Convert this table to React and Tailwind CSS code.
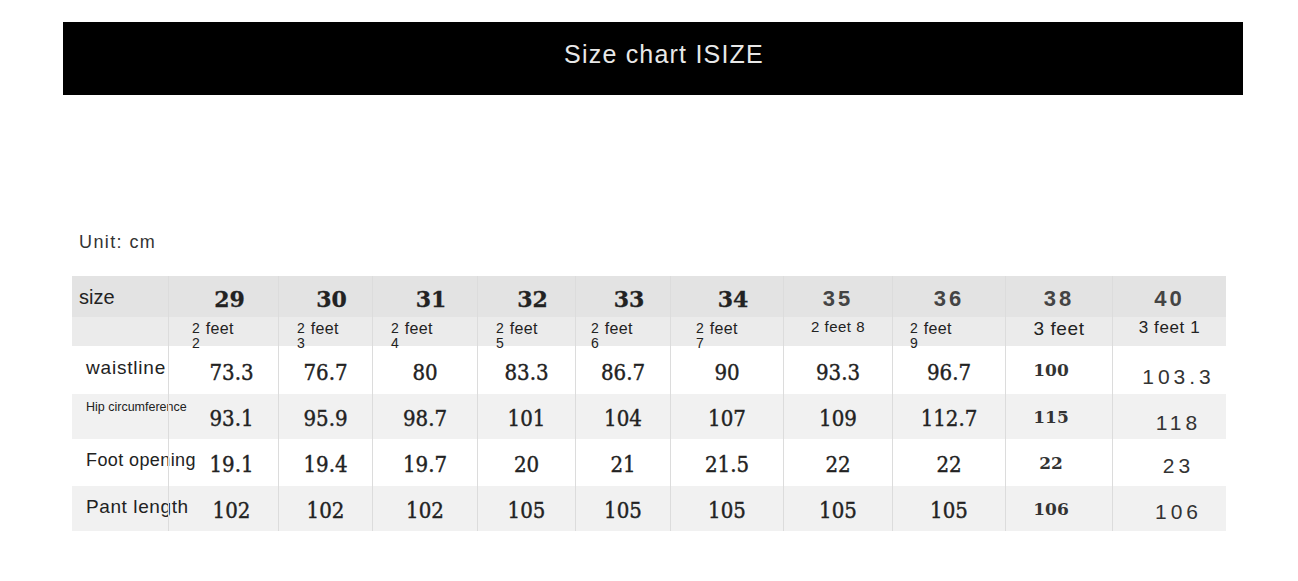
import React from "react";

const COLS =
  "grid grid-cols-[96px_110px_94px_105px_98px_95px_113px_109px_113px_107px_114px]";

const sans = { fontFamily: '"Liberation Sans", Arial, sans-serif' };
const serif = { fontFamily: '"DejaVu Serif", "Liberation Serif", serif' };
const cond = { fontFamily: '"DejaVu Serif Condensed", "DejaVu Serif", serif' };

// "2 feet" with the digits stacked like a broken fraction
const Stacked = ({ top, bottom }) => (
  <span className="inline-flex items-start text-[16px] text-[#222]" style={sans}>
    <span className="flex flex-col text-[14px] leading-[15px] -mt-[1px]">
      <span>{top}</span>
      <span>{bottom}</span>
    </span>
    <span className="ml-[6px] leading-[14px] tracking-[0.3px]">feet</span>
  </span>
);

const sizes = [
  { n: "29", pad: "pl-[23px]", sub: <Stacked top="2" bottom="2" /> },
  { n: "30", pad: "pl-[18px]", sub: <Stacked top="2" bottom="3" /> },
  { n: "31", pad: "pl-[18px]", sub: <Stacked top="2" bottom="4" /> },
  { n: "32", pad: "pl-[18px]", sub: <Stacked top="2" bottom="5" /> },
  { n: "33", pad: "pl-[15px]", sub: <Stacked top="2" bottom="6" /> },
  { n: "34", pad: "pl-[25px]", sub: <Stacked top="2" bottom="7" /> },
  { n: "35", sans: true, sub: <span className="text-[15px] tracking-[0.5px]">2 feet 8</span> },
  { n: "36", sans: true, pad: "pl-[17px]", sub: <Stacked top="2" bottom="9" /> },
  { n: "38", sans: true, sub: <span className="text-[19px] tracking-[0.6px]">3 feet</span> },
  { n: "40", sans: true, sub: <span className="text-[17px] tracking-[0.6px]">3 feet 1</span> },
];

const rows = [
  {
    label: "waistline",
    labelCls: "text-[19px] tracking-[0.8px] pt-[8px]",
    h: "h-[48px]",
    bg: "bg-white",
    last: "mt-[14px]",
    vals: ["73.3", "76.7", "80", "83.3", "86.7", "90", "93.3", "96.7", "100", "103.3"],
  },
  {
    label: "Hip circumference",
    labelCls: "text-[12.5px] pt-[4px]",
    h: "h-[45px]",
    bg: "bg-[#f1f1f1]",
    last: "mt-[12px]",
    vals: ["93.1", "95.9", "98.7", "101", "104", "107", "109", "112.7", "115", "118"],
  },
  {
    label: "Foot opening",
    labelCls: "text-[18px] tracking-[0.4px] pt-[8px]",
    h: "h-[47px]",
    bg: "bg-white",
    last: "mt-[6px]",
    vals: ["19.1", "19.4", "19.7", "20", "21", "21.5", "22", "22", "22", "23"],
  },
  {
    label: "Pant length",
    labelCls: "text-[19px] tracking-[0.6px] pt-[7px]",
    h: "h-[45px]",
    bg: "bg-[#f1f1f1]",
    last: "mt-[6px]",
    vals: ["102", "102", "102", "105", "105", "105", "105", "105", "106", "106"],
  },
];

export default function App() {
  return (
    <div className="w-[1298px] h-[581px] bg-white overflow-hidden">
      {/* Title bar */}
      <div className="ml-[63px] mt-[22px] w-[1180px] h-[73px] bg-black flex items-center justify-center">
        <span
          className="text-[25px] tracking-[1.2px] text-[#e8e8e8] -mt-[8px] ml-[22px]"
          style={sans}
        >
          Size chart ISIZE
        </span>
      </div>

      {/* Unit */}
      <div
        className="ml-[79px] mt-[135px] text-[18px] tracking-[1.4px] text-[#333] leading-[24px]"
        style={sans}
      >
        Unit: cm
      </div>

      {/* Table */}
      <div className="ml-[72px] mt-[22px] w-[1154px]">
        {/* Header */}
        <div className={`${COLS} h-[70px] bg-[linear-gradient(#e3e3e3_0%,#e3e3e3_58%,#ebebeb_58%,#ebebeb_100%)]`}>
          <div className="pl-[7px] pt-[6px] text-[20px] text-[#222]" style={sans}>
            size
          </div>
          {sizes.map((s) => (
            <div key={s.n} className="border-l border-[#dcdcdc] flex flex-col pt-[10px]">
              {s.sans ? (
                <span
                  className="self-center text-[22px] font-bold tracking-[3px] text-[#444] leading-[26px]"
                  style={sans}
                >
                  {s.n}
                </span>
              ) : (
                <span
                  className="self-center text-[22px] font-bold text-[#222] leading-[26px] ml-[12px] [-webkit-text-stroke:0.3px_#222]"
                  style={serif}
                >
                  {s.n}
                </span>
              )}
              <span
                className={`${s.pad ? `${s.pad} self-start mt-[4px]` : "self-center mt-[3px]"} text-[#222]`}
                style={sans}
              >
                {s.sub}
              </span>
            </div>
          ))}
        </div>

        {/* Body */}
        {rows.map((r) => (
          <div key={r.label} className={`${COLS} ${r.h} ${r.bg}`}>
            <div
              className={`pl-[14px] text-[#222] whitespace-nowrap ${r.labelCls}`}
              style={sans}
            >
              {r.label}
            </div>
            {r.vals.map((v, i) => {
              let cls = "text-[22px] text-[#222] mt-[4px] [-webkit-text-stroke:0.4px_#222]";
              let st = cond;
              if (i === 0) cls += " ml-[16px]";
              if (i === 8) {
                cls = "text-[17px] font-bold text-[#333] -ml-[16px] mt-[2px]";
                st = serif;
              }
              if (i === 9) {
                cls = `text-[21px] tracking-[4px] text-[#333] ml-[18px] ${r.last}`;
                st = sans;
              }
              return (
                <div
                  key={i}
                  className="border-l border-[#dcdcdc] flex items-center justify-center"
                >
                  <span className={cls} style={st}>
                    {v}
                  </span>
                </div>
              );
            })}
          </div>
        ))}
      </div>
    </div>
  );
}
